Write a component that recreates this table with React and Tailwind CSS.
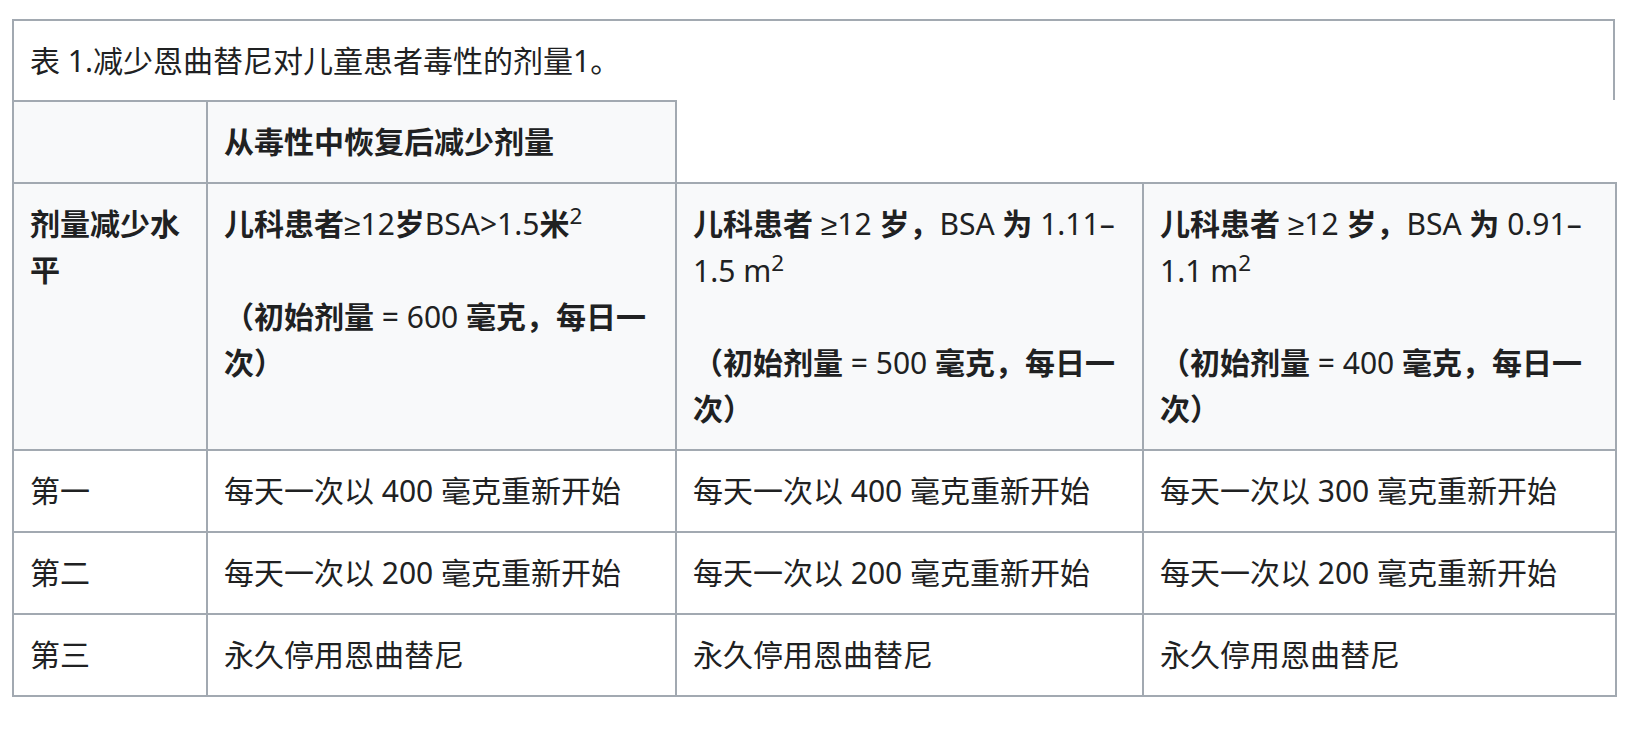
const LINE = "leading-[46px]";
const BORDER = "border-2 border-[#a2a9b1]";

function HeadCell({ children, className = "" }) {
  return (
    <th className={`${BORDER} bg-[#f8f9fa] px-4 py-[17px] text-left align-top font-bold ${LINE} ${className}`}>
      {children}
    </th>
  );
}

function Cell({ children }) {
  return <td className={`${BORDER} px-4 py-[17px] text-left align-top ${LINE}`}>{children}</td>;
}

// latin runs inside the bold headers render at regular weight in the source
function N({ children }) {
  return <span className="font-normal">{children}</span>;
}

function Ge() {
  return <span className="font-normal font-['Liberation_Sans',sans-serif]">≥</span>;
}

const rows = [
  { level: "第一", cells: ["每天一次以 400 毫克重新开始", "每天一次以 400 毫克重新开始", "每天一次以 300 毫克重新开始"] },
  { level: "第二", cells: ["每天一次以 200 毫克重新开始", "每天一次以 200 毫克重新开始", "每天一次以 200 毫克重新开始"] },
  { level: "第三", cells: ["永久停用恩曲替尼", "永久停用恩曲替尼", "永久停用恩曲替尼"] },
];

export default function App() {
  return (
    <div className="min-h-screen bg-white pt-[19px] pl-[12px] text-[30px] text-[#202122] font-['Noto_Sans','Noto_Sans_CJK_SC',sans-serif]">
      <div className="w-[1603px]">
        <div className={`${BORDER} border-b-0 flex h-[81px] items-center pl-4`}>
          表 1.减少恩曲替尼对儿童患者毒性的剂量1。
        </div>
        <table className="w-full table-fixed border-collapse">
          <colgroup>
            <col className="w-[194px]" />
            <col className="w-[469px]" />
            <col className="w-[467px]" />
            <col className="w-[473px]" />
          </colgroup>
          <thead>
            <tr>
              <HeadCell />
              <HeadCell className="align-middle">从毒性中恢复后减少剂量</HeadCell>
            </tr>
            <tr>
              <HeadCell>剂量减少水平</HeadCell>
              <HeadCell className="whitespace-nowrap">
                儿科患者<Ge />
                <N>12</N>岁<N>BSA&gt;1.5</N>米<sup className="font-normal">2</sup>
                <br />
                <br />
                （初始剂量 <N>= 600</N> 毫克，每日一
                <br />
                次）
              </HeadCell>
              <HeadCell className="whitespace-nowrap">
                儿科患者 <Ge />
                <N>12</N> 岁，<N>BSA</N> 为 <N>1.11–</N>
                <br />
                <N>
                  1.5 m<sup>2</sup>
                </N>
                <br />
                <br />
                （初始剂量 <N>= 500</N> 毫克，每日一
                <br />
                次）
              </HeadCell>
              <HeadCell className="whitespace-nowrap">
                儿科患者 <Ge />
                <N>12</N> 岁，<N>BSA</N> 为 <N>0.91–</N>
                <br />
                <N>
                  1.1 m<sup>2</sup>
                </N>
                <br />
                <br />
                （初始剂量 <N>= 400</N> 毫克，每日一
                <br />
                次）
              </HeadCell>
            </tr>
          </thead>
          <tbody>
            {rows.map((row) => (
              <tr key={row.level}>
                <Cell>{row.level}</Cell>
                {row.cells.map((text, i) => (
                  <Cell key={i}>{text}</Cell>
                ))}
              </tr>
            ))}
          </tbody>
        </table>
      </div>
    </div>
  );
}
